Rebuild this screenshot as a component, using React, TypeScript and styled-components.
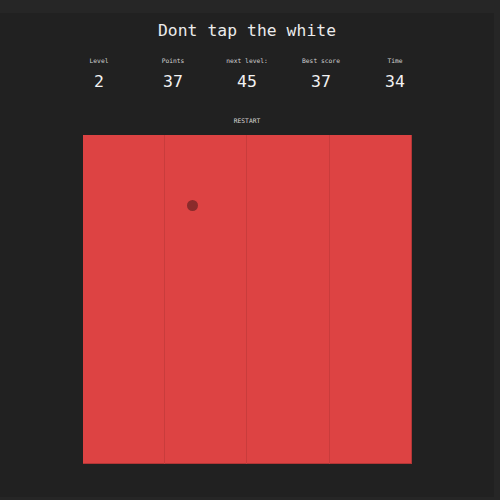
import React from "react";
import styled, { createGlobalStyle } from "styled-components";

const Global = createGlobalStyle`
  html, body { margin: 0; padding: 0; background: #262626; }
  body { width: 500px; height: 500px; overflow: hidden; }
`;

const Page = styled.div`
  margin-top: 13px;
  width: 494px;
  height: 484px;
  background: #212121;
  display: flex;
  flex-direction: column;
  align-items: center;
  font-family: "DejaVu Sans Mono", "Liberation Mono", monospace;
  color: #ececec;
`;

const Title = styled.h1`
  margin: 7px 0 0;
  font-size: 16.3px;
  font-weight: normal;
  line-height: 22px;
  letter-spacing: 0.1px;
`;

const Stats = styled.div`
  margin-top: 15px;
  display: grid;
  grid-template-columns: repeat(5, 74px);
`;

const Stat = styled.div`
  display: flex;
  flex-direction: column;
  align-items: center;
`;

const Label = styled.div`
  font-size: 6.3px;
  line-height: 8px;
  color: #d0d0d0;
`;

const Value = styled.div`
  margin-top: 7px;
  font-size: 16.5px;
  line-height: 20px;
  color: #f2f2f2;
`;

const Restart = styled.button`
  margin-top: 25px;
  background: none;
  border: none;
  padding: 0;
  font-family: inherit;
  font-size: 6.3px;
  line-height: 8px;
  color: #d8d8d8;
  cursor: pointer;
`;

const Board = styled.div`
  margin-top: 10px;
  margin-left: 1px;
  width: 329px;
  height: 329px;
  display: grid;
  grid-template-columns: 82px 82px 83px 82px;
  background: #dd4343;
  box-shadow: inset -1px -1px 0 #b23636;
`;

const Column = styled.div<{ $last?: boolean }>`
  position: relative;
  border-right: 1px solid ${(p) => (p.$last ? "transparent" : "#c93c3c")};
`;

const Dot = styled.span`
  position: absolute;
  left: 22px;
  top: 65px;
  width: 11px;
  height: 11px;
  border-radius: 50%;
  background: #8a2b2b;
`;

const stats = [
  ["Level", "2"],
  ["Points", "37"],
  ["next level:", "45"],
  ["Best score", "37"],
  ["Time", "34"],
];

export default function App() {
  return (
    <>
      <Global />
      <Page>
        <Title>Dont tap the white</Title>
        <Stats>
          {stats.map(([l, v]) => (
            <Stat key={l}>
              <Label>{l}</Label>
              <Value>{v}</Value>
            </Stat>
          ))}
        </Stats>
        <Restart>RESTART</Restart>
        <Board>
          <Column />
          <Column>
            <Dot />
          </Column>
          <Column />
          <Column $last />
        </Board>
      </Page>
    </>
  );
}
